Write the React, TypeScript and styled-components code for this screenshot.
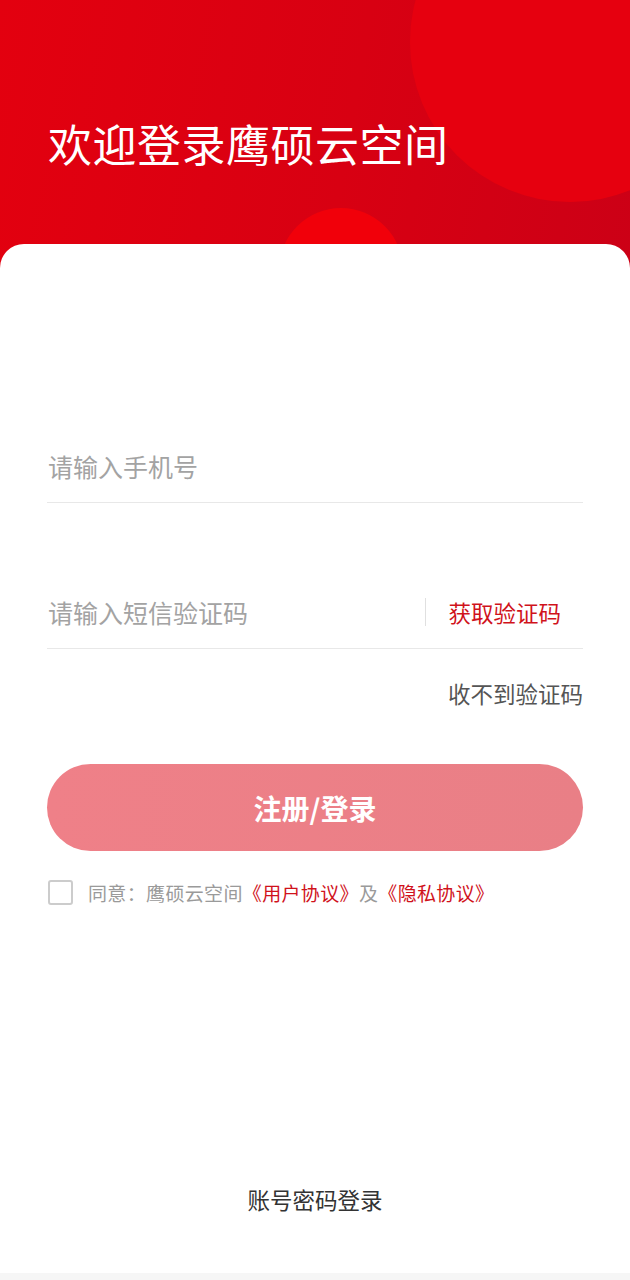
import * as React from "react"
import styled, { createGlobalStyle } from "styled-components"

const GlobalStyle = createGlobalStyle`
  html, body {
    margin: 0;
    padding: 0;
    background: #ffffff;
  }
  body {
    font-family: "Noto Sans CJK SC", "Noto Sans", sans-serif;
  }
  * {
    box-sizing: border-box;
  }
`

const Page = styled.div`
  width: 630px;
  height: 1280px;
  display: flex;
  flex-direction: column;
  background: #ffffff;
  overflow: hidden;
`

const Header = styled.header`
  position: relative;
  height: 268px;
  padding: 113px 0 0 48px;
  background: linear-gradient(100deg, #e3000f 0%, #d80012 55%, #cc0016 100%);
  overflow: hidden;
`

const Bubble = styled.div<{ $x: number; $y: number; $r: number; $color: string }>`
  position: absolute;
  left: ${(p) => p.$x - p.$r}px;
  top: ${(p) => p.$y - p.$r}px;
  width: ${(p) => p.$r * 2}px;
  height: ${(p) => p.$r * 2}px;
  border-radius: 50%;
  background: ${(p) => p.$color};
`

const Title = styled.h1`
  position: relative;
  margin: 0;
  font-size: 44px;
  line-height: 60px;
  font-weight: 400;
  color: #ffffff;
  letter-spacing: 0.5px;
`

const Card = styled.main`
  position: relative;
  z-index: 1;
  flex: 1;
  margin-top: -24px;
  padding: 186px 47px 0 47px;
  background: #ffffff;
  border-radius: 24px 24px 0 0;
  display: flex;
  flex-direction: column;
`

const Field = styled.div<{ $gap?: number }>`
  display: flex;
  align-items: center;
  height: 73px;
  margin-top: ${(p) => p.$gap ?? 0}px;
  border-bottom: 1px solid #e8e8e8;
`

const Input = styled.input`
  flex: 1;
  min-width: 0;
  border: none;
  outline: none;
  padding: 0 0 0 1px;
  background: transparent;
  font-family: inherit;
  font-size: 25px;
  color: #333333;
  &::placeholder {
    color: #a3a3a3;
  }
`

const CodeButton = styled.button`
  display: flex;
  align-items: center;
  height: 28px;
  padding: 0 22px 0 22px;
  border: none;
  border-left: 1px solid #e0e0e0;
  background: transparent;
  font-family: inherit;
  font-size: 22.5px;
  color: #d0121b;
  cursor: pointer;
`

const HelpLink = styled.div`
  align-self: flex-end;
  margin-top: 29px;
  font-size: 22.5px;
  line-height: 30px;
  color: #555555;
`

const Submit = styled.button`
  margin-top: 56px;
  height: 87px;
  border: none;
  border-radius: 44px;
  background: linear-gradient(90deg, #ef8088 0%, #e97f86 100%);
  font-family: inherit;
  font-size: 28px;
  font-weight: 700;
  color: #ffffff;
  cursor: pointer;
`

const Agreement = styled.label`
  display: flex;
  align-items: center;
  gap: 15px;
  margin-top: 28px;
  padding-left: 1px;
  font-size: 19px;
  letter-spacing: 0.35px;
  color: #9a9a9a;
`

const Checkbox = styled.span`
  width: 25px;
  height: 25px;
  border: 2px solid #cccccc;
  border-radius: 3px;
  flex-shrink: 0;
`

const Red = styled.span`
  color: #d0121b;
`

const Footer = styled.div`
  margin-top: auto;
  padding-bottom: 59px;
  text-align: center;
  font-size: 22.5px;
  line-height: 30px;
  color: #333333;
`

const NavStrip = styled.div`
  height: 7px;
  background: #f6f6f6;
`

const App: React.FC = () => {
  return (
    <>
      <GlobalStyle />
      <Page>
        <Header>
          <Bubble $x={570} $y={42} $r={160} $color="#e6000f" />
          <Bubble $x={341} $y={270} $r={62} $color="#f1000a" />
          <Title>欢迎登录鹰硕云空间</Title>
        </Header>
        <Card>
          <Field>
            <Input placeholder="请输入手机号" />
          </Field>
          <Field $gap={73}>
            <Input placeholder="请输入短信验证码" />
            <CodeButton>获取验证码</CodeButton>
          </Field>
          <HelpLink>收不到验证码</HelpLink>
          <Submit>注册/登录</Submit>
          <Agreement>
            <Checkbox />
            <span>
              同意：鹰硕云空间<Red>《用户协议》</Red>及<Red>《隐私协议》</Red>
            </span>
          </Agreement>
          <Footer>账号密码登录</Footer>
        </Card>
        <NavStrip />
      </Page>
    </>
  )
}

export default App
